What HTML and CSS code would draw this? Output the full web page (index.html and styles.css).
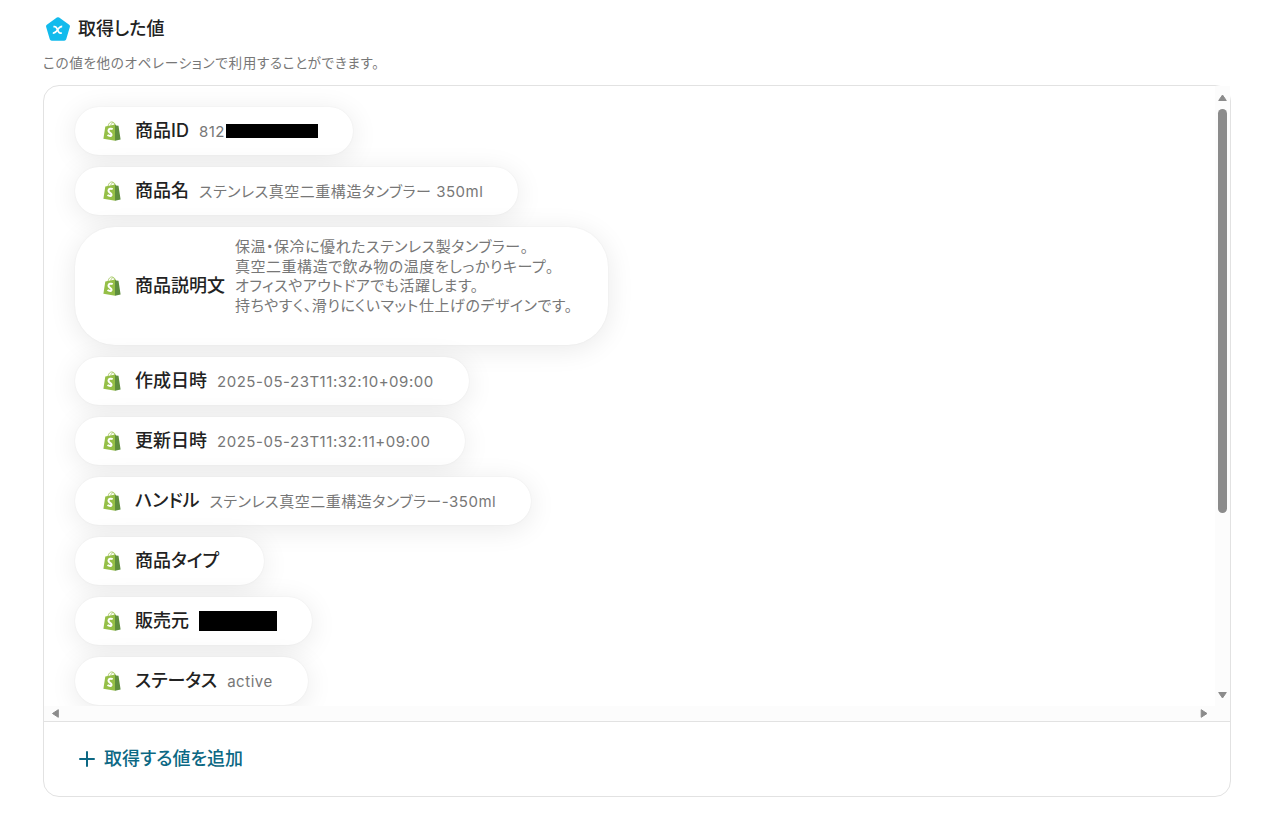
FILE: index.html
```html
<!DOCTYPE html>
<html lang="ja">

<head>
    <meta charset="UTF-8">
    <meta name="viewport" content="width=device-width, initial-scale=1.0">
    <title>取得した値</title>
    <link rel="stylesheet" href="styles.css">
</head>

<body>
    <svg class="defs" width="0" height="0">
        <symbol id="bag" viewBox="0 0 18 20">
            <path d="M5 5.2C5.600 2.200 7.400 .8 9 .9c1.800.1 2.500 2 2.600 3.600M7.700 4.700C8 2.800 9.300 1.500 10.500 1.600c1 .1 1.500 1.400 1.600 2.600" fill="none" stroke="#a9cb6b" stroke-width=".9" />
            <path d="M2.300 5.500L12.200 3.400V19.700L.4 17.700z" fill="#95bf47" />
            <path d="M12 3.400l1.200 1.100 2.300.3L17.600 18.400 12 19.700z" fill="#5e8e3e" />
            <path d="M9.700 8.100C8.200 7.300 5.500 7.700 5.500 9.800c0 2.200 3 2 3 3.900 0 1.800-2.400 1.400-4 .3" fill="none" stroke="#fff" stroke-width="2.100" />
        </symbol>
    </svg>
    <div class="title">
        <svg width="26" height="26" viewBox="0 0 26 26">
            <path d="M13 3.200L23 10.300 19.300 22.800H6.700L3 10.300z" fill="#12bbed" stroke="#12bbed" stroke-width="4" stroke-linejoin="round" />
            <path d="M8.400 10.600h1.300c1 0 1.300.3 1.700 1.100l2.200 4.200c.4.800.8 1.200 1.700 1.200h1.500M17.200 10.500c-1.400-.1-2.100.3-3 1.300l-3.200 3.900c-.9 1-1.600 1.500-3.200 1.400" fill="none" stroke="#fff" stroke-width="1.800" />
        </svg>
        <h1>取得した値</h1>
    </div>
    <p class="desc">この値を他のオペレーションで利用することができます。</p>

    <div class="panel">
        <div class="scroll">
            <div class="list">
                <div class="chip">
                    <svg class="icon"><use href="#bag" /></svg>
                    <div class="label">商品ID</div>
                    <div class="value masked">812<span class="mask mask-id"></span></div>
                </div>
                <div class="chip">
                    <svg class="icon"><use href="#bag" /></svg>
                    <div class="label">商品名</div>
                    <div class="value">ステンレス真空二重構造タンブラー 350ml</div>
                </div>
                <div class="chip">
                    <svg class="icon"><use href="#bag" /></svg>
                    <div class="label">商品説明文</div>
                    <div class="value multi">保温・保冷に優れたステンレス製タンブラー。<br>真空二重構造で飲み物の温度をしっかりキープ。<br>オフィスやアウトドアでも活躍します。<br>持ちやすく、滑りにくいマット仕上げのデザインです。<br><br></div>
                </div>
                <div class="chip">
                    <svg class="icon"><use href="#bag" /></svg>
                    <div class="label">作成日時</div>
                    <div class="value">2025-05-23T11:32:10+09:00</div>
                </div>
                <div class="chip">
                    <svg class="icon"><use href="#bag" /></svg>
                    <div class="label">更新日時</div>
                    <div class="value">2025-05-23T11:32:11+09:00</div>
                </div>
                <div class="chip">
                    <svg class="icon"><use href="#bag" /></svg>
                    <div class="label">ハンドル</div>
                    <div class="value">ステンレス真空二重構造タンブラー-350ml</div>
                </div>
                <div class="chip">
                    <svg class="icon"><use href="#bag" /></svg>
                    <div class="label">商品タイプ</div>
                    <div class="value"></div>
                </div>
                <div class="chip">
                    <svg class="icon"><use href="#bag" /></svg>
                    <div class="label">販売元</div>
                    <div class="value masked mask-only"><span class="mask mask-vendor"></span></div>
                </div>
                <div class="chip">
                    <svg class="icon"><use href="#bag" /></svg>
                    <div class="label">ステータス</div>
                    <div class="value">active</div>
                </div>
            </div>
            <div class="bar-y">
                <svg width="9" height="8" viewBox="0 0 9 8"><path d="M4.500 1L8.300 6.500H.7z" /></svg>
                <div class="thumb"></div>
                <svg class="down" width="9" height="8" viewBox="0 0 9 8"><path d="M4.500 7L8.300 1.500H.7z" /></svg>
            </div>
            <div class="bar-x">
                <svg width="8" height="9" viewBox="0 0 8 9"><path d="M1.500 4.500L7.300 .7V8.300z" /></svg>
                <svg width="8" height="9" viewBox="0 0 8 9"><path d="M7 4.500L1.200 .7V8.300z" /></svg>
            </div>
        </div>
        <div class="add">
            <svg width="16" height="16" viewBox="0 0 16 16"><path d="M8 1v14M1 8h14" fill="none" stroke="#0c6884" stroke-width="2" stroke-linecap="round" /></svg>
            <span>取得する値を追加</span>
        </div>
    </div>
</body>

</html>
```
FILE: styles.css
```css
* {
    box-sizing: border-box;
}

body {
    margin: 0;
    padding: 16px 48px 0 43px;
    font-family: Inter, "Noto Sans CJK JP", sans-serif;
    font-feature-settings: "palt";
    color: #222;
    background: #fff;
}

.defs {
    display: block;
}

.title {
    display: flex;
    align-items: center;
    gap: 7px;
    height: 26px;
    padding-left: 2px;
}

.title h1 {
    margin: 0;
    font-size: 18px;
    font-weight: 500;
    line-height: 26px;
}

.desc {
    margin: 11px 0 12px;
    font-size: 13.6px;
    line-height: 20px;
    letter-spacing: 0.047em;
    color: #777;
}

.panel {
    width: 1188px;
    height: 712px;
    border: 1px solid #e2e2e2;
    border-radius: 16px;
}

.scroll {
    display: grid;
    grid-template-columns: 1fr 15px;
    grid-template-rows: 620px 15px;
    border-bottom: 1px solid #e2e2e2;
}

.list {
    display: flex;
    flex-direction: column;
    align-items: flex-start;
    gap: 12px;
    padding: 21px 31px;
    overflow: hidden;
}

.chip {
    display: flex;
    flex-shrink: 0;
    align-items: center;
    min-height: 48px;
    padding: 10px 35px 10px 28px;
    border-radius: 40px;
    background: #fff;
    box-shadow: 0 4px 28px rgba(0, 0, 0, 0.09), 0 0 2px rgba(0, 0, 0, 0.06);
}

.icon {
    width: 18px;
    height: 20px;
    margin-right: 14px;
}

.label {
    margin-right: 10px;
    font-size: 18px;
    font-weight: 500;
    line-height: 26px;
    white-space: nowrap;
}

.value {
    padding-top: 1px;
    font-size: 15px;
    line-height: 19.6px;
    letter-spacing: 0.035em;
    color: #777;
    white-space: nowrap;
}

.multi,
.mask-only {
    padding-top: 0;
}

.masked {
    display: flex;
    align-items: center;
}

.mask {
    background: #000;
}

.mask-id {
    width: 92px;
    height: 14px;
    margin: -1px 0 0 0.8px;
}

.mask-vendor {
    width: 78px;
    height: 20px;
}

.bar-y,
.bar-x {
    display: flex;
    align-items: center;
    background: #fcfcfc;
}

.bar-y {
    flex-direction: column;
    padding: 8px 0 7px;
}

.bar-x {
    grid-column: 1 / 3;
    justify-content: space-between;
    padding: 0 22px 0 7px;
}

.bar-y path,
.bar-x path {
    fill: #8b8b8b;
    stroke: #8b8b8b;
    stroke-linejoin: round;
}

.thumb {
    width: 9px;
    height: 404px;
    margin-top: 7px;
    border-radius: 5px;
    background: #8b8b8b;
}

.down {
    margin-top: auto;
}

.add {
    display: flex;
    align-items: center;
    gap: 9px;
    height: 74px;
    padding-left: 35px;
    font-size: 18px;
    font-weight: 500;
    color: #0c6884;
}

.add span {
    padding-bottom: 4px;
}
```
